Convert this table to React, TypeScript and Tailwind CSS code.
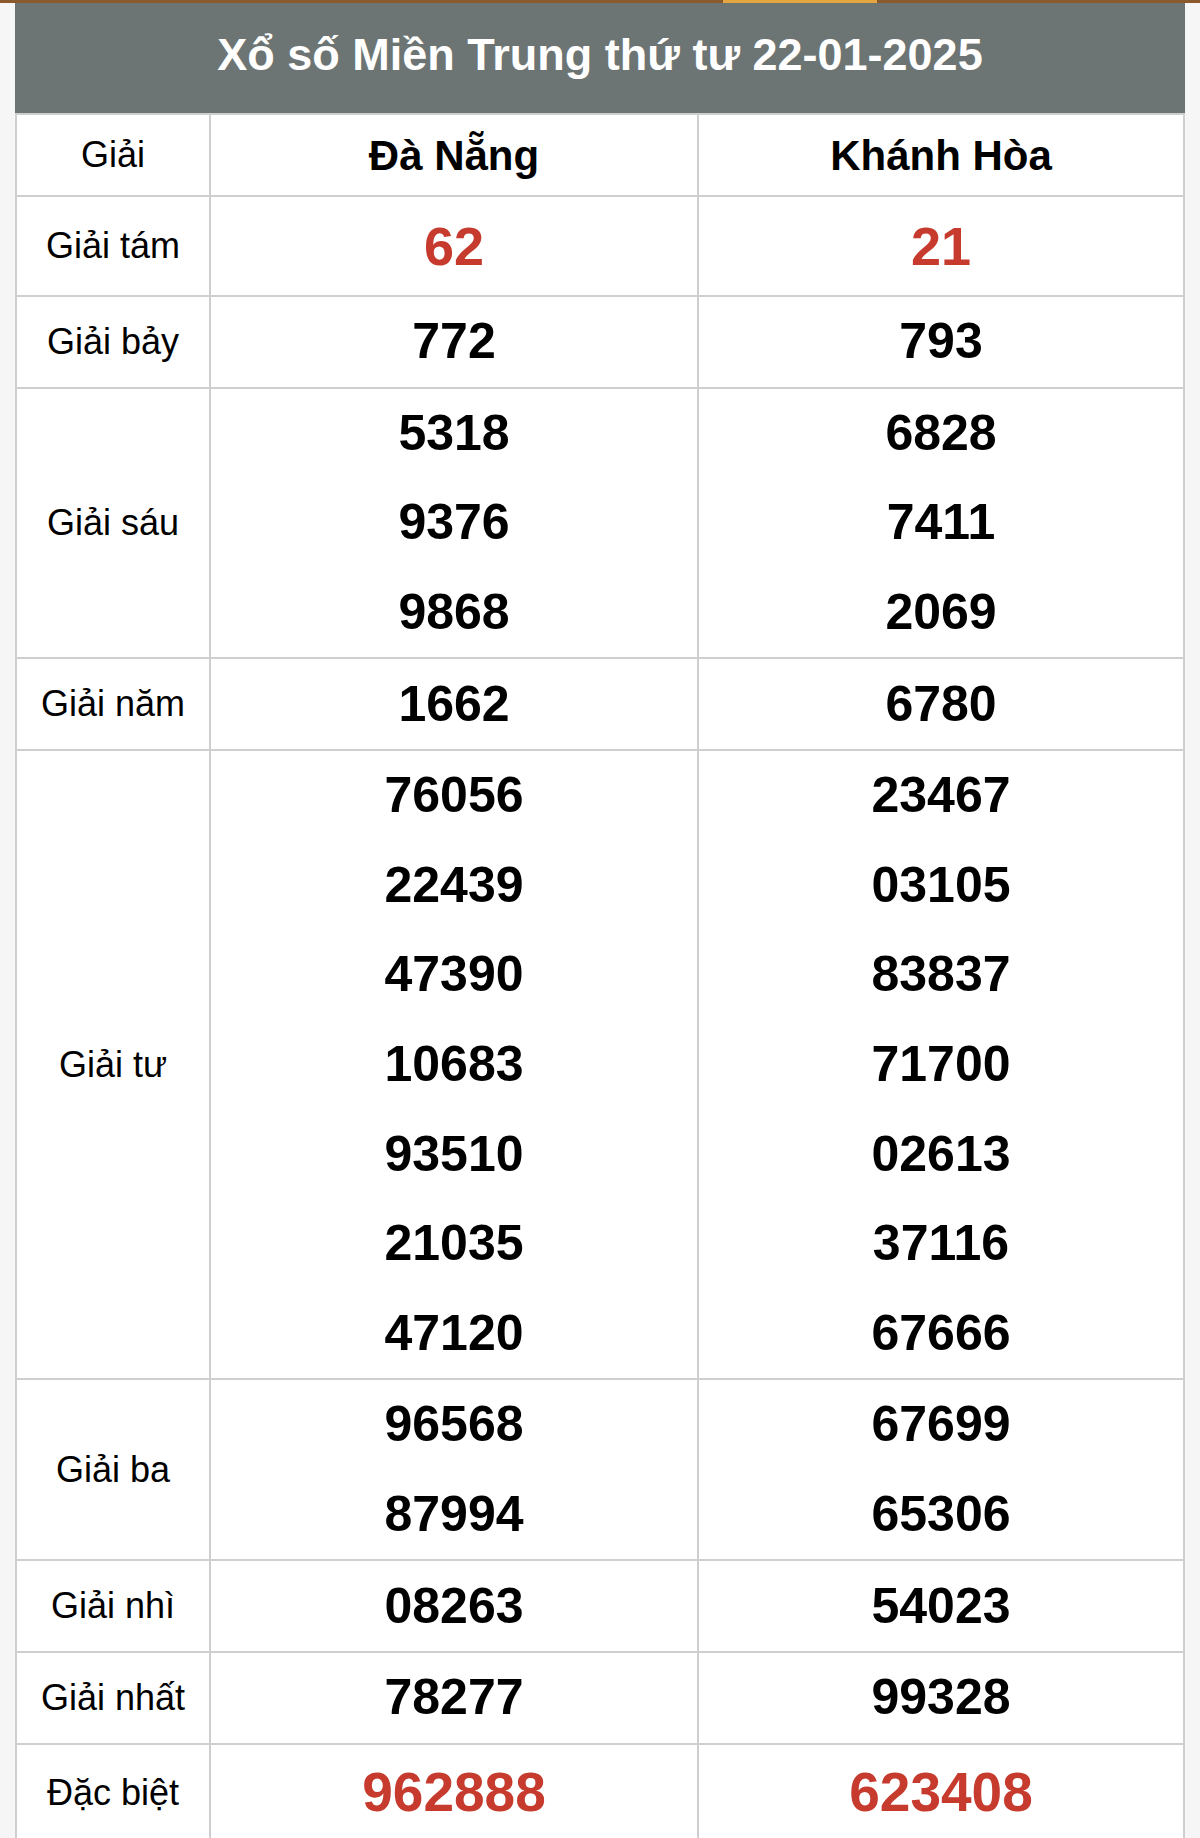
const rows = [
  { label: "Giải tám", dn: ["62"], kh: ["21"], red: true, tall: true },
  { label: "Giải bảy", dn: ["772"], kh: ["793"] },
  { label: "Giải sáu", dn: ["5318", "9376", "9868"], kh: ["6828", "7411", "2069"] },
  { label: "Giải năm", dn: ["1662"], kh: ["6780"] },
  {
    label: "Giải tư",
    dn: ["76056", "22439", "47390", "10683", "93510", "21035", "47120"],
    kh: ["23467", "03105", "83837", "71700", "02613", "37116", "67666"],
  },
  { label: "Giải ba", dn: ["96568", "87994"], kh: ["67699", "65306"] },
  { label: "Giải nhì", dn: ["08263"], kh: ["54023"] },
  { label: "Giải nhất", dn: ["78277"], kh: ["99328"] },
  { label: "Đặc biệt", dn: ["962888"], kh: ["623408"], red: true },
];

type Row = (typeof rows)[number] & { red?: boolean; tall?: boolean };

function Numbers({ items, red, tall }: { items: string[]; red?: boolean; tall?: boolean }) {
  return (
    <div className="flex flex-col">
      {items.map((n, i) => (
        <div
          key={i}
          className={
            tall
              ? "flex h-[98px] items-center justify-center text-[54px] font-bold text-[#c63b2d]"
              : red
              ? "flex h-[96px] items-center justify-center text-[55px] font-bold text-[#c63b2d]"
              : "flex h-[89.6px] items-center justify-center text-[50px] font-bold text-black"
          }
        >
          {n}
        </div>
      ))}
    </div>
  );
}

export default function App() {
  return (
    <div className="min-h-screen bg-[#f6f6f6] font-['Liberation_Sans',Arial,sans-serif]">
      <div className="flex h-[3px] bg-[#8a5a2e]">
        <div className="ml-[723px] w-[154px] bg-[#e4a63e]" />
      </div>
      <div className="mx-[15px]">
        <div className="flex h-[110px] items-center justify-center bg-[#6d7574] pb-[6px] text-[45px] font-bold text-white">
          Xổ số Miền Trung thứ tư 22-01-2025
        </div>
        <div className="border-x-2 border-[#cfcfcf] bg-white">
          <div className="flex border-t-2 border-[#cfcfcf]">
            <div className="flex h-[80px] w-[194px] items-center justify-center border-r-2 border-[#cfcfcf] text-[36px] text-black">
              Giải
            </div>
            <div className="flex h-[80px] w-[488px] items-center justify-center border-r-2 border-[#cfcfcf] text-[42px] font-bold text-black">
              Đà Nẵng
            </div>
            <div className="flex h-[80px] flex-1 items-center justify-center text-[42px] font-bold text-black">
              Khánh Hòa
            </div>
          </div>
          {(rows as Row[]).map((r) => (
            <div key={r.label} className="flex border-t-2 border-[#cfcfcf]">
              <div className="flex w-[194px] items-center justify-center border-r-2 border-[#cfcfcf] text-[36px] text-black">
                {r.label}
              </div>
              <div className="w-[488px] border-r-2 border-[#cfcfcf]">
                <Numbers items={r.dn} red={r.red} tall={r.tall} />
              </div>
              <div className="flex-1">
                <Numbers items={r.kh} red={r.red} tall={r.tall} />
              </div>
            </div>
          ))}
        </div>
      </div>
    </div>
  );
}
